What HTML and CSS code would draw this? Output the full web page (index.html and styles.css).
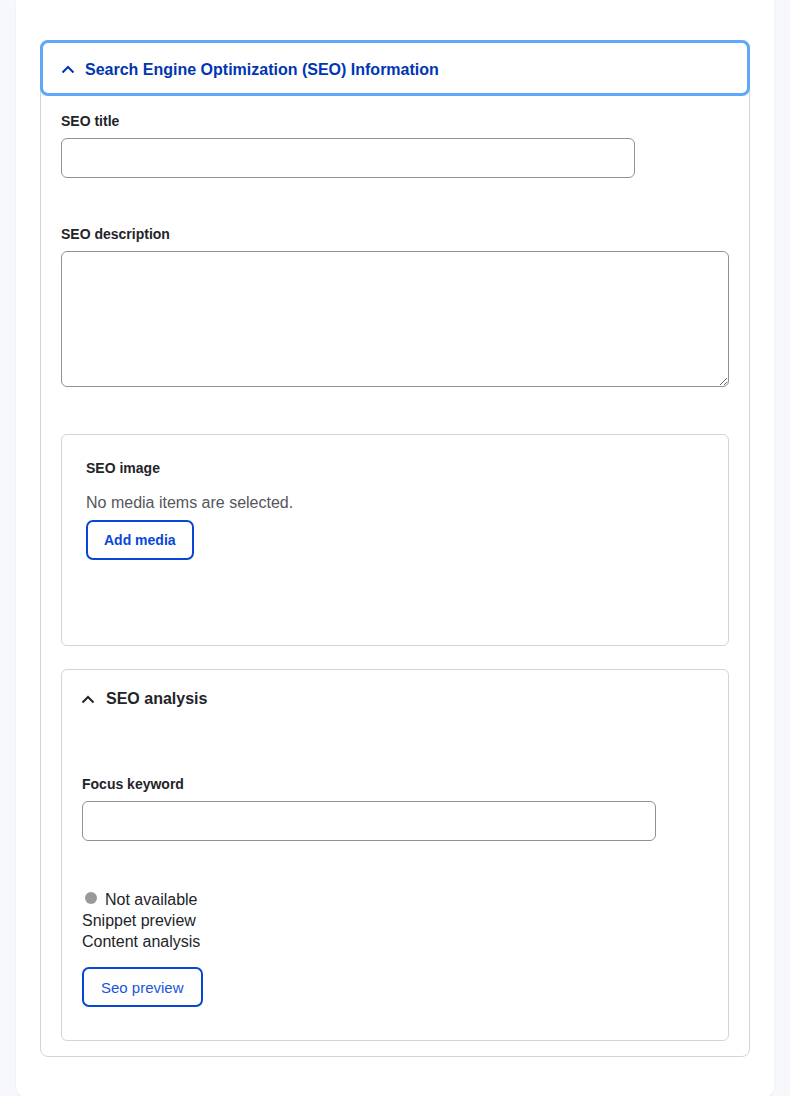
FILE: index.html
```html
<!DOCTYPE html>
<html lang="en">
<head>
    <meta charset="UTF-8">
    <meta name="viewport" content="width=device-width, initial-scale=1.0">
    <title>SEO Information</title>
    <link rel="stylesheet" href="styles.css">
</head>
<body>

<div class="card">
    <details class="seo" open>
        <summary class="seo-summary">
            <svg class="chevron" width="14" height="9" viewBox="0 0 14 9"><path d="M1.5 7.5 L7 2 L12.5 7.5" fill="none" stroke="currentColor" stroke-width="2"/></svg>
            Search Engine Optimization (SEO) Information
        </summary>
        <div class="seo-body">
            <div class="form-item">
                <label for="seoTitle">SEO title</label>
                <input type="text" id="seoTitle" class="text-input">
            </div>

            <div class="form-item">
                <label for="seoDescription">SEO description</label>
                <textarea id="seoDescription" class="text-area"></textarea>
            </div>

            <fieldset class="media-box">
                <div class="box-label">SEO image</div>
                <p class="empty">No media items are selected.</p>
                <button type="button" class="btn btn-bold">Add media</button>
            </fieldset>

            <details class="analysis" open>
                <summary class="analysis-summary">
                    <svg class="chevron" width="14" height="9" viewBox="0 0 14 9"><path d="M1.5 7.5 L7 2 L12.5 7.5" fill="none" stroke="currentColor" stroke-width="2"/></svg>
                    SEO analysis
                </summary>
                <div class="analysis-body">
                    <div class="form-item">
                        <label for="focusKeyword">Focus keyword</label>
                        <input type="text" id="focusKeyword" class="text-input">
                    </div>
                    <div class="status">
                        <div class="status-line"><span class="dot"></span>Not available</div>
                        <div>Snippet preview</div>
                        <div>Content analysis</div>
                    </div>
                    <button type="button" class="btn btn-wide">Seo preview</button>
                </div>
            </details>
        </div>
    </details>
</div>

</body>
</html>
```

FILE: styles.css
```css
body {
    margin: 0;
    background: #f7f8fc;
    font-family: "Liberation Sans", Arial, sans-serif;
    color: #232429;
}
.card {
    margin: 0 16px;
    background: #fff;
    border-radius: 0 0 10px 10px;
    padding: 40px 24px;
    box-shadow: 0 1px 3px rgba(0,0,0,0.06);
}
.seo {
    border: 1px solid #d3d4d9;
    border-radius: 8px;
}
.seo-summary {
    list-style: none;
    display: flex;
    align-items: center;
    gap: 10px;
    box-sizing: content-box;
    margin: -1px;
    padding: 3px 0 0 18px;
    height: 47px;
    border: 3px solid #5fa7f8;
    border-radius: 8px;
    color: #0036b1;
    font-size: 16px;
    font-weight: bold;
    cursor: pointer;
}
.seo-summary::-webkit-details-marker { display: none; }
.chevron { flex: none; }
.seo-body { padding: 17px 20px 15px; }
.form-item { margin-bottom: 47px; }
label, .box-label {
    display: block;
    font-size: 14px;
    font-weight: bold;
    line-height: 18px;
    margin-bottom: 8px;
}
.text-input {
    display: block;
    box-sizing: border-box;
    width: 574px;
    height: 40px;
    border: 1px solid #919297;
    border-radius: 6px;
    padding: 0 12px;
    font: inherit;
}
.text-area {
    display: block;
    box-sizing: border-box;
    width: 100%;
    height: 136px;
    border: 1px solid #919297;
    border-radius: 6px;
    font: inherit;
}
.media-box {
    margin: 0 0 23px;
    padding: 24px 24px 85px;
    border: 1px solid #d3d4d9;
    border-radius: 6px;
    min-width: 0;
}
.empty {
    margin: 14px 0 5px;
    font-size: 16px;
    line-height: 24px;
    color: #55565b;
}
.btn {
    display: block;
    height: 40px;
    padding: 0 16px;
    background: #fff;
    border: 2px solid #0847d6;
    border-radius: 7px;
    color: #0847d6;
    font-family: inherit;
    font-size: 14px;
    cursor: pointer;
}
.btn-bold { font-weight: bold; }
.btn-wide { font-size: 15px; padding: 0 17px; color: #1a55dc; }
.analysis {
    border: 1px solid #d3d4d9;
    border-radius: 6px;
}
.analysis-summary {
    list-style: none;
    display: flex;
    align-items: center;
    gap: 11px;
    padding: 0 19px;
    height: 58px;
    font-size: 16px;
    font-weight: bold;
    cursor: pointer;
}
.analysis-summary::-webkit-details-marker { display: none; }
.analysis-body { padding: 47px 20px 33px; }
.analysis-body .form-item { margin-bottom: 48px; }
.status {
    font-size: 16px;
    line-height: 21px;
    margin-bottom: 15px;
}
.status-line { display: flex; align-items: center; }
.dot {
    width: 12px;
    height: 12px;
    border-radius: 50%;
    background: #999;
    margin: -4px 8px 0 3px;
}
```
